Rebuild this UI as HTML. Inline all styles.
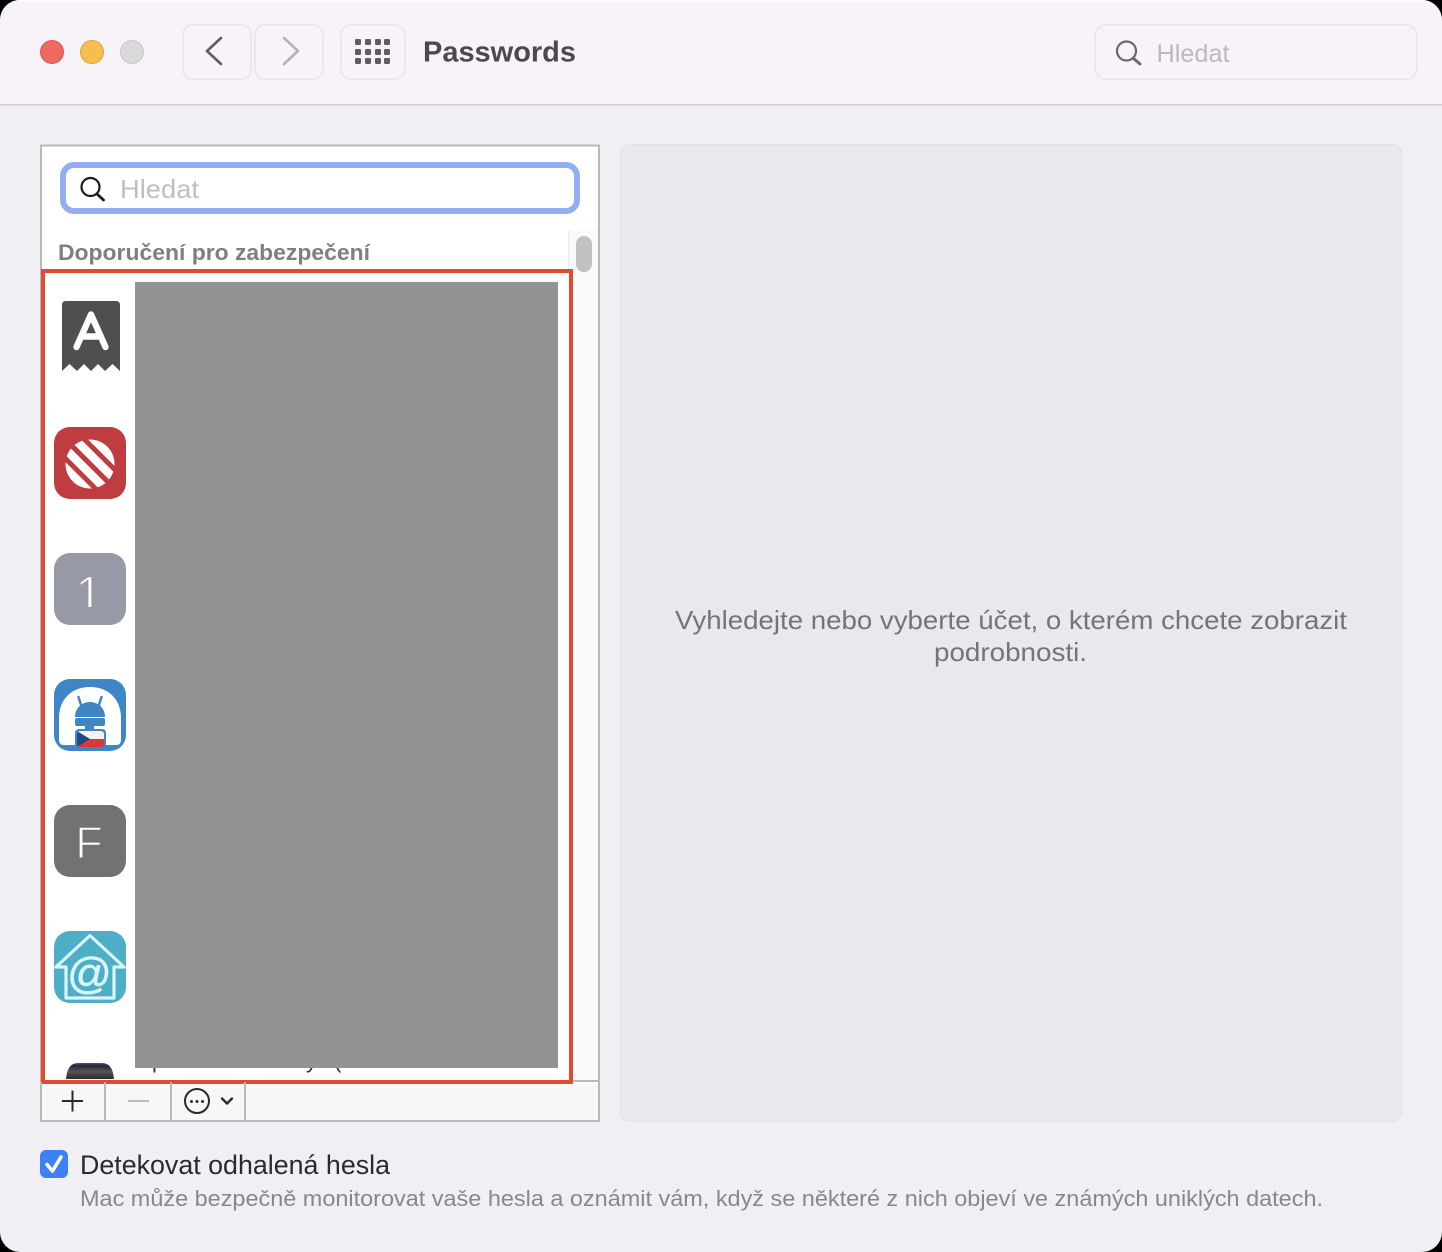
<!DOCTYPE html>
<html lang="cs">
<head>
<meta charset="utf-8">
<title>Passwords</title>
<style>
html,body{margin:0;padding:0;width:1442px;height:1252px;overflow:hidden;background:#000}
svg{display:block}
text{font-family:"Liberation Sans",sans-serif}
</style>
</head>
<body>
<svg xmlns="http://www.w3.org/2000/svg" width="1442" height="1252" viewBox="0 0 1442 1252">
<defs>
<clipPath id="win"><rect x="0" y="0" width="1442" height="1252" rx="20"/></clipPath>
<clipPath id="ball"><circle cx="90" cy="464" r="24.500"/></clipPath>
<clipPath id="dome"><rect x="60" y="1060" width="60" height="19"/></clipPath>
<clipPath id="bits"><rect x="135" y="1068" width="423" height="11"/></clipPath>
<clipPath id="flag"><rect x="77" y="731" width="27" height="16" rx="3"/></clipPath>
<clipPath id="onefoot"><rect x="70" y="570" width="40" height="37"/></clipPath>
<linearGradient id="dg" x1="0" y1="0" x2="0" y2="1"><stop offset="0" stop-color="#3a55c0"/><stop offset=".14" stop-color="#26262b"/><stop offset=".45" stop-color="#55555a"/><stop offset="1" stop-color="#17171c"/></linearGradient>
</defs>
<g clip-path="url(#win)">
<rect width="1442" height="1252" fill="#f1eff3"/>
<rect width="1442" height="104" fill="#f7f3f8"/>
<rect width="1442" height="1.500" fill="#fdfbfe"/>
<rect y="104" width="1442" height="1.500" fill="#d1cfd2"/>

<!-- traffic lights -->
<circle cx="52" cy="52" r="11.500" fill="#ee6a5f" stroke="#d8574d" stroke-width="1"/>
<circle cx="92" cy="52" r="11.500" fill="#f5bf4f" stroke="#d9a33c" stroke-width="1"/>
<circle cx="132" cy="52" r="11.500" fill="#dcd9dd" stroke="#c9c6ca" stroke-width="1"/>

<!-- nav buttons -->
<rect x="183" y="25" width="68" height="54" rx="10" fill="#f7f3f8" stroke="#ebe8ec" stroke-width="2"/>
<rect x="255" y="25" width="68" height="54" rx="10" fill="#f7f3f8" stroke="#ebe8ec" stroke-width="2"/>
<rect x="341" y="25" width="64" height="54" rx="10" fill="#f7f3f8" stroke="#ebe8ec" stroke-width="2"/>
<path d="M221 38 L207 51 L221 64" fill="none" stroke="#5f5d61" stroke-width="2.600" stroke-linecap="round" stroke-linejoin="round"/>
<path d="M284 38 L298 51 L284 64" fill="none" stroke="#b5b3b7" stroke-width="2.600" stroke-linecap="round" stroke-linejoin="round"/>
<g fill="#5f5d61">
<rect x="355" y="39" width="6" height="6" rx="1.200"/><rect x="365" y="39" width="6" height="6" rx="1.200"/><rect x="375" y="39" width="6" height="6" rx="1.200"/><rect x="384" y="39" width="6" height="6" rx="1.200"/>
<rect x="355" y="49" width="6" height="6" rx="1.200"/><rect x="365" y="49" width="6" height="6" rx="1.200"/><rect x="375" y="49" width="6" height="6" rx="1.200"/><rect x="384" y="49" width="6" height="6" rx="1.200"/>
<rect x="355" y="58" width="6" height="6" rx="1.200"/><rect x="365" y="58" width="6" height="6" rx="1.200"/><rect x="375" y="58" width="6" height="6" rx="1.200"/><rect x="384" y="58" width="6" height="6" rx="1.200"/>
</g>
<text x="423" y="61.500" font-size="29" font-weight="700" fill="#4b494d" textLength="153" lengthAdjust="spacingAndGlyphs">Passwords</text>

<!-- toolbar search -->
<rect x="1095" y="25" width="322" height="54" rx="11" fill="#f7f3f8" stroke="#ebe8ec" stroke-width="2"/>
<circle cx="1126.500" cy="51" r="9.500" fill="none" stroke="#6a686c" stroke-width="2.200"/>
<path d="M1133.500 58.500 L1140 64" stroke="#6a686c" stroke-width="2.800" stroke-linecap="round"/>
<text x="1156.500" y="62" font-size="25" fill="#bcb9be" textLength="73" lengthAdjust="spacingAndGlyphs">Hledat</text>

<!-- left panel -->
<rect x="41" y="145.500" width="558" height="975" fill="#ffffff" stroke="#b9b8ba" stroke-width="2"/>
<rect x="569" y="230" width="29" height="851" fill="#fafafa"/>
<rect x="568" y="230" width="1.500" height="40" fill="#eeeeee"/>
<rect x="576" y="236" width="16" height="36" rx="8" fill="#c1c1c1"/>

<!-- list search -->
<rect x="63" y="165" width="514" height="46" rx="11" fill="#ffffff" stroke="#93aef0" stroke-width="6"/>
<circle cx="90.500" cy="187" r="9" fill="none" stroke="#1c1c1e" stroke-width="2.200"/>
<path d="M97 194 L103.500 200" stroke="#1c1c1e" stroke-width="2.800" stroke-linecap="round"/>
<text x="120" y="198" font-size="26" fill="#bfbec0" textLength="79" lengthAdjust="spacingAndGlyphs">Hledat</text>

<text x="58" y="260" font-size="22.500" font-weight="700" fill="#7f7e80" textLength="312" lengthAdjust="spacingAndGlyphs">Doporučení pro zabezpečení</text>

<!-- icon A -->
<path d="M66 301 H116 Q120 301 120 305 V371 L112.500 364 L105 371 L98 364 L91 371 L84 364 L77 371 L69.500 364 L62 371 V305 Q62 301 66 301 Z" fill="#4f4f4f"/>
<path d="M76.500 347 L91 314.500 L105.500 347 M82 336.500 H100" fill="none" stroke="#fff" stroke-width="6.400" stroke-linecap="round" stroke-linejoin="round"/>

<!-- icon stripes -->
<rect x="54" y="427" width="72" height="72" rx="16" fill="#bf3d40"/>
<g clip-path="url(#ball)" stroke="#fff" stroke-width="8.500">
<path d="M50 424 L130 504" transform="translate(14.300,-14.300)"/>
<path d="M50 424 L130 504" transform="translate(4.800,-4.800)"/>
<path d="M50 424 L130 504" transform="translate(-4.800,4.800)"/>
<path d="M50 424 L130 504" transform="translate(-14.300,14.300)"/>
</g>

<!-- icon 1 -->
<rect x="54" y="553" width="72" height="72" rx="16" fill="#9899a6"/>
<g clip-path="url(#onefoot)">
<text x="89" y="610.500" font-size="49" fill="#ffffff" stroke="#9899a6" stroke-width="1.400" text-anchor="middle">1</text>
</g>

<!-- icon android -->
<rect x="54" y="679" width="72" height="72" rx="16" fill="#3f86c6"/>
<path d="M59 740 V718 C59 699 72 687 90 687 C108 687 121 699 121 718 V740 Q121 745 116 745 H64 Q59 745 59 740 Z" fill="#fff"/>
<path d="M75 717 C75 708 82 702 90 702 C98 702 105 708 105 717 Z" fill="#3f86c6"/>
<path d="M81 705 L78.500 697 M99 705 L101.500 697" stroke="#3f86c6" stroke-width="2.500" stroke-linecap="round"/>
<rect x="75" y="718" width="30" height="8" rx="2" fill="#3f86c6"/>
<rect x="85" y="725" width="9" height="7" fill="#3f86c6"/>
<rect x="75" y="729" width="31" height="22" rx="4" fill="#3f86c6"/>
<g clip-path="url(#flag)">
<rect x="77" y="731" width="27" height="8" fill="#f3f3f3"/>
<rect x="77" y="739" width="27" height="8" fill="#d8383c"/>
<path d="M77 731 L90 739 L77 747 Z" fill="#1f4a86"/>
</g>

<!-- icon F -->
<rect x="54" y="805" width="72" height="72" rx="16" fill="#727272"/>
<text x="89" y="858" font-size="45" fill="#ffffff" stroke="#727272" stroke-width="1.400" text-anchor="middle">F</text>

<!-- icon house -->
<rect x="54" y="931" width="72" height="72" rx="16" fill="#4eaec8"/>
<path d="M56 967 L90 935.500 L124 967 H114 V998 H66 V967 Z" fill="none" stroke="#d8f5f7" stroke-width="3.200" stroke-linejoin="round"/>
<text x="89.500" y="988" font-size="44" fill="#d8f5f7" stroke="#d8f5f7" stroke-width=".6" text-anchor="middle">@</text>

<!-- partial icon -->
<g clip-path="url(#dome)">
<path d="M66 1082 C66 1070 70 1063 78 1063 H102 C110 1063 114 1070 114 1082 Z" fill="url(#dg)"/>
</g>

<!-- clipped row text -->
<g clip-path="url(#bits)" font-size="22" fill="#333">
<text x="152" y="1068">p</text>
<text x="306" y="1068">y</text>
<text x="334" y="1068">(</text>
</g>

<!-- redaction and red frame -->
<rect x="135" y="282" width="423" height="786" fill="#939393"/>
<rect x="43" y="271" width="528" height="811" fill="none" stroke="#e04a2f" stroke-width="4"/>

<!-- list toolbar -->
<rect x="42" y="1084" width="556" height="36" fill="#f8f7f8"/>
<rect x="573" y="1080" width="27" height="2" fill="#b9b8ba"/>
<rect x="40" y="1120" width="560" height="2" fill="#b9b8ba"/>
<rect x="598" y="1080" width="2" height="42" fill="#b9b8ba"/>
<rect x="40" y="1082" width="2" height="40" fill="#b9b8ba"/>
<rect x="104" y="1082" width="2" height="38" fill="#b9b8ba"/>
<rect x="170" y="1082" width="2" height="38" fill="#b9b8ba"/>
<rect x="244" y="1082" width="2" height="38" fill="#b9b8ba"/>
<path d="M62 1101 H83 M72.500 1090.500 V1111.500" stroke="#2a2a2c" stroke-width="2"/>
<path d="M128 1101 H149" stroke="#bdbcbe" stroke-width="2"/>
<circle cx="197" cy="1101" r="12" fill="none" stroke="#2a2a2c" stroke-width="2"/>
<circle cx="191.500" cy="1101.500" r="1.500" fill="#2a2a2c"/><circle cx="197" cy="1101.500" r="1.500" fill="#2a2a2c"/><circle cx="202.500" cy="1101.500" r="1.500" fill="#2a2a2c"/>
<path d="M222 1098.500 L227 1103.500 L232 1098.500" fill="none" stroke="#2a2a2c" stroke-width="2.400" stroke-linecap="round" stroke-linejoin="round"/>

<!-- right panel -->
<rect x="620.500" y="144.500" width="781" height="977" rx="9" fill="#eae8ec" stroke="#e4e2e6" stroke-width="1"/>
<text x="675" y="629" font-size="26" fill="#767478" textLength="672" lengthAdjust="spacingAndGlyphs">Vyhledejte nebo vyberte účet, o kterém chcete zobrazit</text>
<text x="934" y="661" font-size="26" fill="#767478" textLength="153" lengthAdjust="spacingAndGlyphs">podrobnosti.</text>

<!-- checkbox -->
<rect x="40" y="1150" width="28" height="28" rx="6" fill="#3c82f6"/>
<path d="M47 1164.500 L52.500 1171 L61 1157" fill="none" stroke="#fff" stroke-width="3.600" stroke-linecap="round" stroke-linejoin="round"/>
<text x="80" y="1174" font-size="26.500" fill="#2b2a2d" textLength="310" lengthAdjust="spacingAndGlyphs">Detekovat odhalená hesla</text>
<text x="80" y="1206" font-size="22" fill="#89878b" textLength="1243" lengthAdjust="spacingAndGlyphs">Mac může bezpečně monitorovat vaše hesla a oznámit vám, když se některé z nich objeví ve známých uniklých datech.</text>
</g>
</svg>
</body>
</html>
